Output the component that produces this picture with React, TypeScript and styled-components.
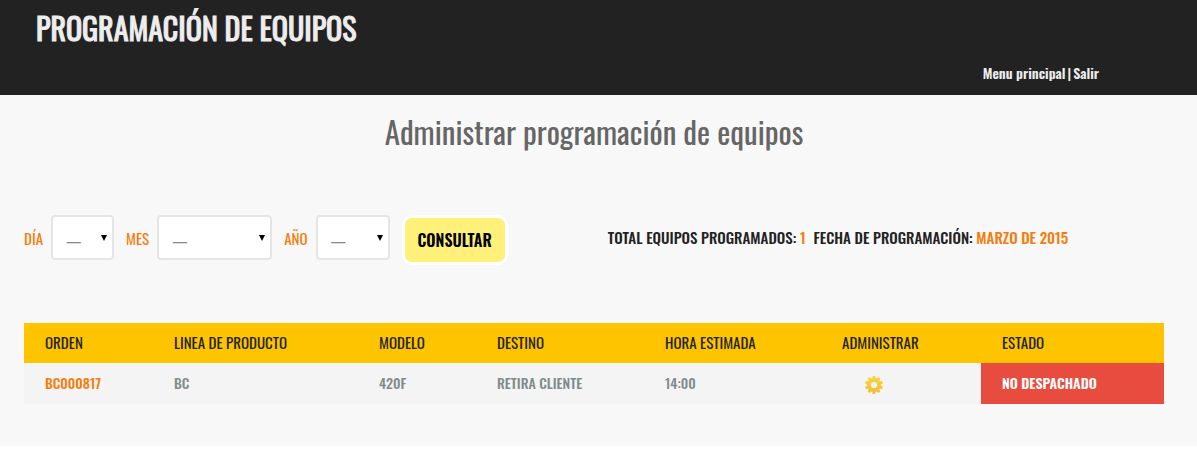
import React from "react";
import styled, { createGlobalStyle } from "styled-components";

const GlobalStyle = createGlobalStyle`
  *, *::before, *::after { box-sizing: border-box; }
  body {
    margin: 0;
    background: #ffffff;
    color: #222222;
    font-family: Oswald, "Liberation Sans Narrow", "Liberation Sans", sans-serif;
    font-size: 15px;
    line-height: 20px;
  }
  button, select { font-family: inherit; }
`;

const Header = styled.header`
  background: #222222;
  color: #ededed;
  padding: 8px 98px 12px 36px;
`;

const Brand = styled.h1`
  margin: 0;
  font-size: 30px;
  font-weight: 400;
  line-height: 40px;
  -webkit-text-stroke: 1px currentColor;
`;

const HeaderNav = styled.nav`
  display: flex;
  justify-content: flex-end;
  gap: 2px;
  margin-top: 15px;
  font-size: 14px;
  font-weight: 600;
`;

const NavLink = styled.a`
  color: inherit;
  text-decoration: none;
`;

const Main = styled.main`
  background: #f8f8f8;
  padding: 16px 33px 42px 24px;
`;

const PageTitle = styled.h2`
  margin: 0;
  color: #666666;
  font-size: 31px;
  font-weight: 400;
  line-height: 40px;
  text-align: center;
`;

const Toolbar = styled.div`
  display: flex;
  align-items: flex-start;
  margin-top: 64px;
`;

const Filters = styled.form`
  display: flex;
  align-items: flex-start;
  gap: 12px;
`;

const Field = styled.label`
  display: flex;
  align-items: center;
  gap: 8px;
  color: #f57c0a;
`;

const SelectBox = styled.span<{ $width: number }>`
  display: grid;
  align-items: center;
  width: ${(p) => p.$width}px;
`;

const Select = styled.select`
  grid-area: 1 / 1;
  appearance: none;
  width: 100%;
  height: 45px;
  padding: 4px 24px 0 13px;
  border: 2px solid #e5e5e5;
  border-radius: 4px;
  background: #ffffff;
  color: #888888;
  font-size: 15px;
`;

const Arrow = styled.svg`
  grid-area: 1 / 1;
  justify-self: end;
  width: 6px;
  height: 6px;
  margin-right: 7px;
  pointer-events: none;
`;

const SubmitButton = styled.button`
  height: 50px;
  padding: 0 13px;
  border: 3px solid #ffffff;
  border-radius: 10px;
  background: #fff07a;
  color: #000000;
  font-size: 16px;
  font-weight: 600;
`;

const Summary = styled.p`
  display: flex;
  gap: 8px;
  margin: 0 0 0 100px;
  font-weight: 500;
  line-height: 44px;
`;

const Highlight = styled.span`
  color: #f57c0a;
`;

const Table = styled.table`
  width: 100%;
  margin-top: 58px;
  border-collapse: collapse;
  table-layout: fixed;
  text-align: left;
`;

const Col = styled.col<{ $width: number }>`
  width: ${(p) => p.$width}px;
`;

const HeadCell = styled.th`
  height: 40px;
  padding: 0 21px 2px;
  background: #ffc400;
  color: #222222;
  font-weight: 400;
`;

const Cell = styled.td<{ $status?: boolean }>`
  height: 41px;
  padding: 0 21px 2px;
  background: ${(p) => (p.$status ? "#e74c3f" : "#f4f4f4")};
  color: ${(p) => (p.$status ? "#ffffff" : "#7f8c8d")};
  font-size: 14px;
  font-weight: ${(p) => (p.$status ? 600 : 500)};
`;

const OrderLink = styled.a`
  color: #f57c0a;
  text-decoration: none;
`;

const IconButton = styled.button`
  display: block;
  margin-left: 23px;
  padding: 5px 0 0;
  border: 0;
  background: none;
`;

const teeth = Array.from({ length: 10 }, (_, i) => i * 36);

const GearIcon = () => (
  <svg width="18" height="18" viewBox="0 0 18 18" display="block" aria-hidden="true">
    <defs>
      <linearGradient id="gear" x1="0" y1="0" x2="0" y2="18" gradientUnits="userSpaceOnUse">
        <stop offset="0" stopColor="#f9d63f" />
        <stop offset="1" stopColor="#efbd33" />
      </linearGradient>
      <mask id="gear-shape">
        {teeth.map((angle) => (
          <path
            key={angle}
            d="M7.3 4 7.5 1Q7.6 0 8.5 0h1Q10.4 0 10.5 1l.2 3z"
            fill="#fff"
            transform={`rotate(${angle} 9 9)`}
          />
        ))}
        <circle cx="9" cy="9" r="6.9" fill="#fff" />
        <circle cx="9" cy="9" r="3.1" fill="#000" />
      </mask>
    </defs>
    <rect width="18" height="18" fill="url(#gear)" mask="url(#gear-shape)" />
  </svg>
);

const columns = [
  { label: "ORDEN", width: 129 },
  { label: "LINEA DE PRODUCTO", width: 205 },
  { label: "MODELO", width: 118 },
  { label: "DESTINO", width: 168 },
  { label: "HORA ESTIMADA", width: 177 },
  { label: "ADMINISTRAR", width: 160 },
  { label: "ESTADO", width: 183 },
];

const filters = [
  { label: "DÍA", width: 63 },
  { label: "MES", width: 115 },
  { label: "AÑO", width: 74 },
];

export default function App() {
  return (
    <>
      <GlobalStyle />
      <Header>
        <Brand>PROGRAMACIÓN DE EQUIPOS</Brand>
        <HeaderNav>
          <NavLink href="#menu">Menu principal</NavLink>
          <span>|</span>
          <NavLink href="#salir">Salir</NavLink>
        </HeaderNav>
      </Header>
      <Main>
        <PageTitle>Administrar programación de equipos</PageTitle>
        <Toolbar>
          <Filters onSubmit={(e) => e.preventDefault()}>
            {filters.map((f) => (
              <Field key={f.label}>
                {f.label}
                <SelectBox $width={f.width}>
                  <Select>
                    <option>—</option>
                  </Select>
                  <Arrow viewBox="0 0 6 6" aria-hidden="true">
                    <path d="M0 0h6L3 6z" fill="#000" />
                  </Arrow>
                </SelectBox>
              </Field>
            ))}
            <SubmitButton type="submit">CONSULTAR</SubmitButton>
          </Filters>
          <Summary>
            <span>
              TOTAL EQUIPOS PROGRAMADOS: <Highlight>1</Highlight>
            </span>
            <span>
              FECHA DE PROGRAMACIÓN: <Highlight>MARZO DE 2015</Highlight>
            </span>
          </Summary>
        </Toolbar>
        <Table>
          <colgroup>
            {columns.map((c) => (
              <Col key={c.label} $width={c.width} />
            ))}
          </colgroup>
          <thead>
            <tr>
              {columns.map((c) => (
                <HeadCell key={c.label} scope="col">
                  {c.label}
                </HeadCell>
              ))}
            </tr>
          </thead>
          <tbody>
            <tr>
              <Cell>
                <OrderLink href="#BC000817">BC000817</OrderLink>
              </Cell>
              <Cell>BC</Cell>
              <Cell>420F</Cell>
              <Cell>RETIRA CLIENTE</Cell>
              <Cell>14:00</Cell>
              <Cell>
                <IconButton type="button" aria-label="Administrar">
                  <GearIcon />
                </IconButton>
              </Cell>
              <Cell $status>NO DESPACHADO</Cell>
            </tr>
          </tbody>
        </Table>
      </Main>
    </>
  );
}
